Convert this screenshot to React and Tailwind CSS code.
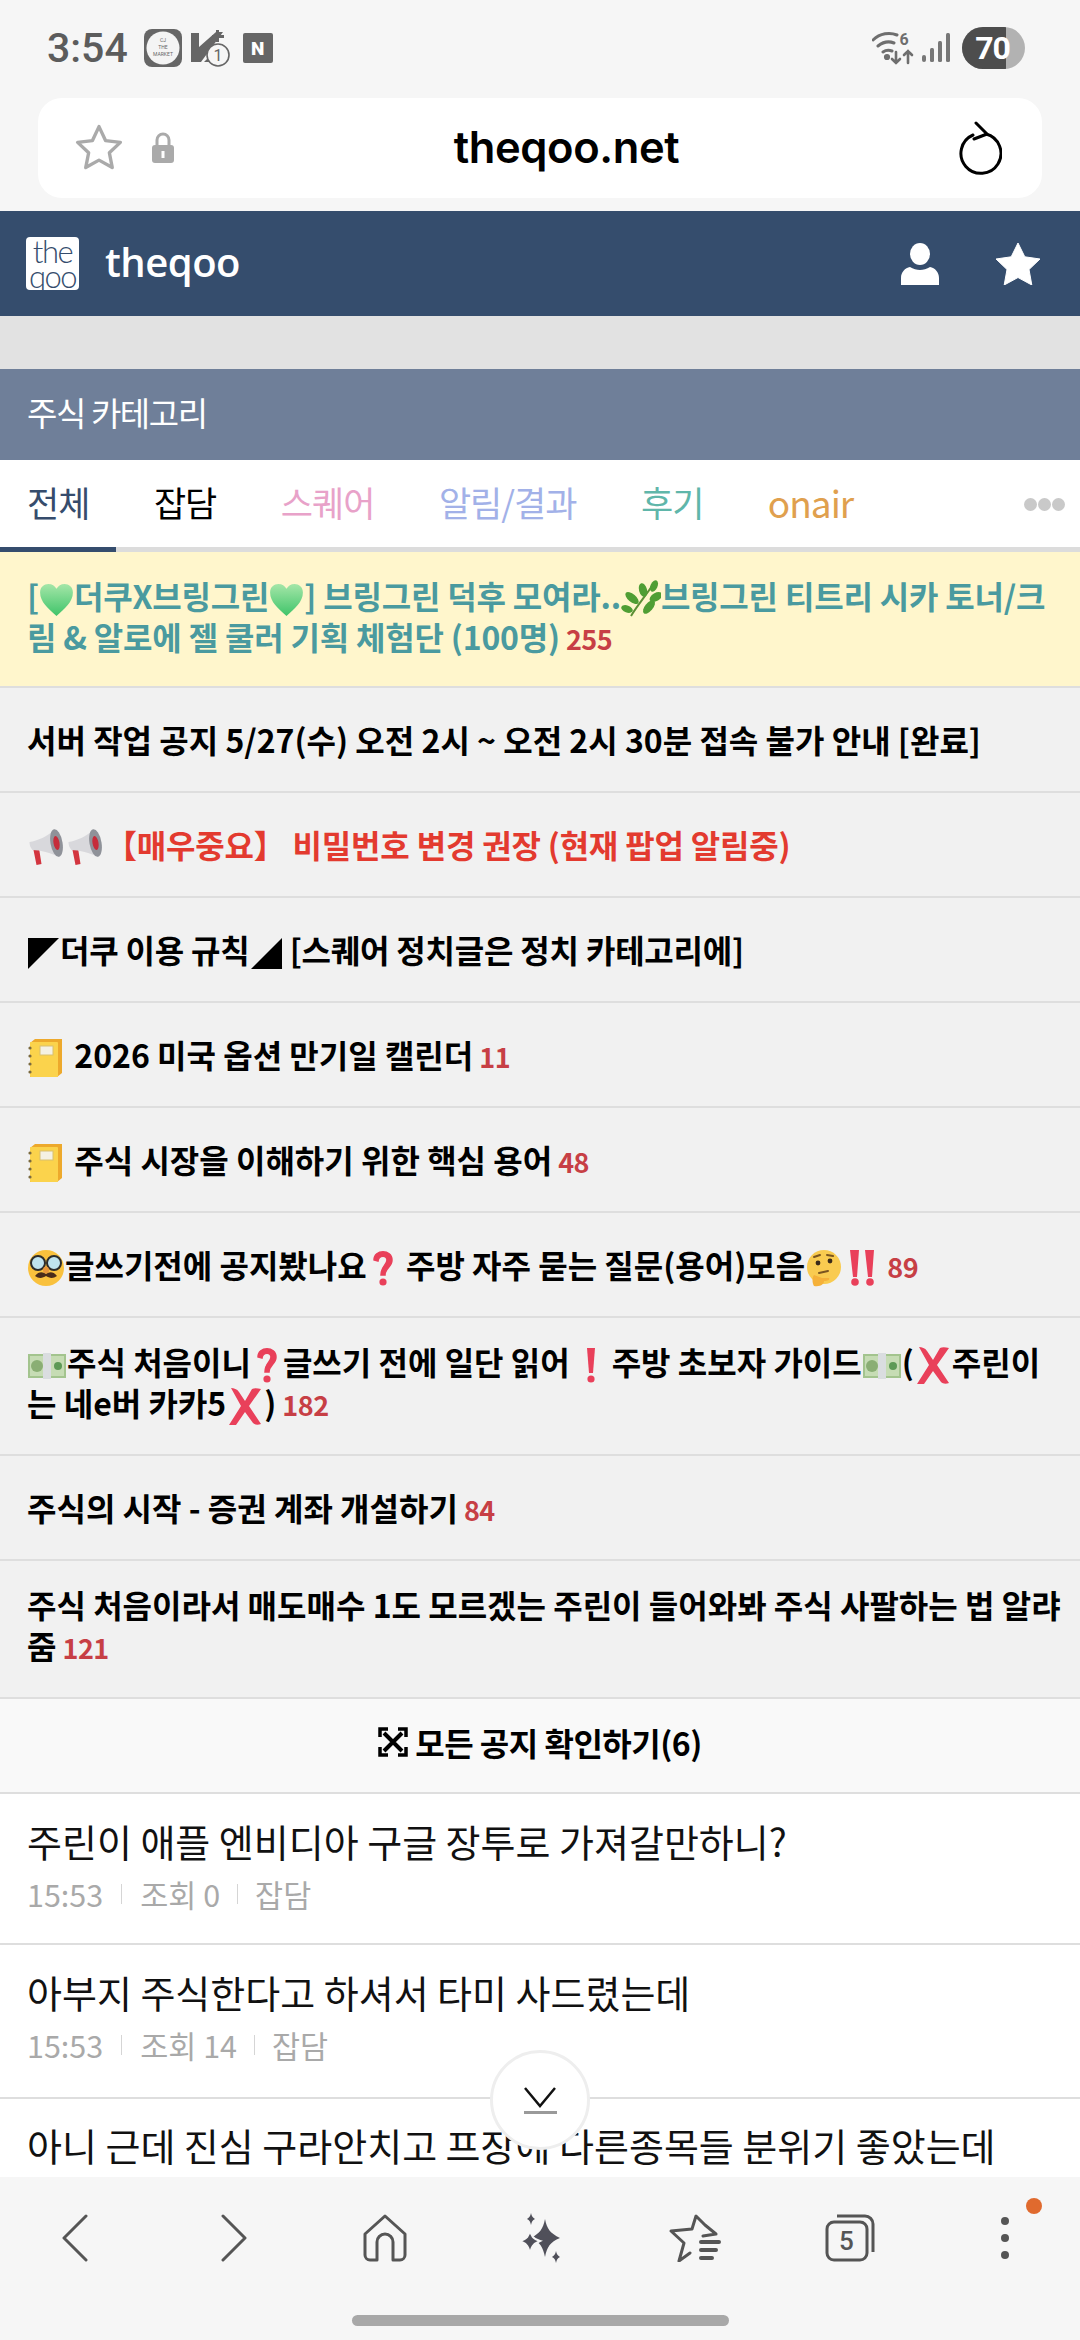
import React from 'react';

const Heart = () => (
  <svg viewBox="0 0 40 36" className="inline-block w-[41px] h-[34px] -my-[8px] -mx-[3px] align-[0px]" preserveAspectRatio="none">
    <defs>
      <linearGradient id="hg" x1="0" y1="0" x2="0" y2="1"><stop offset="0" stopColor="#a5e6a8" /><stop offset="1" stopColor="#3fc46a" /></linearGradient>
    </defs>
    <path d="M20 35C12 27 4 20 4 10 4 4 8 1 12 1c4 0 6 2 8 5 2-3 4-5 8-5 4 0 8 3 8 9 0 10-8 17-16 25z" fill="url(#hg)" />
  </svg>
);

const Herb = () => (
  <svg viewBox="0 0 40 38" className="inline-block w-[40px] h-[38px] -my-[10px] align-[1px]">
    <path d="M10 36C16 26 26 14 33 3" stroke="#5c8f35" strokeWidth="2" fill="none" />
    <g fill="#4f9e34">
      <ellipse cx="33" cy="6" rx="3.5" ry="6" transform="rotate(25 33 6)" />
      <ellipse cx="22" cy="10" rx="4" ry="7" transform="rotate(-15 22 10)" />
      <ellipse cx="35" cy="17" rx="4" ry="7" transform="rotate(60 35 17)" />
      <ellipse cx="11" cy="18" rx="4" ry="8" transform="rotate(-50 11 18)" />
      <ellipse cx="28" cy="27" rx="4" ry="8" transform="rotate(40 28 27)" />
      <ellipse cx="6" cy="29" rx="3.5" ry="6" transform="rotate(-70 6 29)" />
    </g>
  </svg>
);

const Megaphone = () => (
  <svg viewBox="0 0 38 38" className="inline-block w-[39px] h-[38px] -my-[10px] align-[1px]">
    <path d="M3 14l2 2 4 20 5-1-3-19z" fill="#d3353f" />
    <path d="M2 13c8-1 18-6 25-12l5 27c-9-4-19-7-27-7-2-2-3-5-3-8z" fill="#d8d8dc" />
    <ellipse cx="29" cy="14" rx="6" ry="14" fill="#8f9299" transform="rotate(-10 29 14)" />
    <ellipse cx="29" cy="14" rx="3" ry="7" fill="#c62c3a" transform="rotate(-10 29 14)" />
  </svg>
);

const Notebook = () => (
  <svg viewBox="0 0 36 40" className="inline-block w-[36px] h-[40px] -my-[10px] mr-[4px] align-[0px]">
    <path d="M3 5l5-4h27v34l-5 4H3z" fill="#eda92c" />
    <rect x="3" y="4" width="28" height="35" rx="1" fill="#fbd34c" />
    <rect x="13" y="8" width="13" height="9" fill="#f4f1e4" stroke="#d8c070" strokeWidth="1" />
    <g fill="#7a6a40">
      <circle cx="3" cy="10" r="1.6" /><circle cx="3" cy="18" r="1.6" /><circle cx="3" cy="26" r="1.6" /><circle cx="3" cy="34" r="1.6" />
    </g>
  </svg>
);

const Disguise = () => (
  <svg viewBox="0 0 38 38" className="inline-block w-[38px] h-[38px] -my-[10px] align-[1px]">
    <circle cx="19" cy="19" r="18" fill="#f9c13d" />
    <circle cx="11" cy="14" r="7" fill="#bfe3ee" stroke="#2c2c2c" strokeWidth="2" />
    <circle cx="27" cy="14" r="7" fill="#bfe3ee" stroke="#2c2c2c" strokeWidth="2" />
    <path d="M8 27c4-5 8-4 11-2 3-2 7-3 11 2-4 3-8 2-11 0-3 2-7 3-11 0z" fill="#4a2c1a" />
    <ellipse cx="19" cy="21" rx="3" ry="3.5" fill="#e8963a" />
  </svg>
);

const Thinking = () => (
  <svg viewBox="0 0 38 38" className="inline-block w-[38px] h-[38px] -my-[10px] align-[1px]">
    <circle cx="19" cy="18" r="17" fill="#f9cb50" />
    <circle cx="13" cy="14" r="2.4" fill="#3a2a1a" />
    <circle cx="25" cy="12" r="2.4" fill="#3a2a1a" />
    <path d="M9 8l6-2M22 6l6 1" stroke="#7a5520" strokeWidth="2" strokeLinecap="round" />
    <path d="M14 24l9-2" stroke="#7a5520" strokeWidth="2" strokeLinecap="round" />
    <path d="M9 37c-2-3-2-9 0-11l8 3 7 0c1 2-1 3-5 3 0 3-3 6-10 5z" fill="#f5b13a" />
  </svg>
);

const Question = () => (
  <svg viewBox="0 0 26 38" className="inline-block w-[26px] h-[38px] -my-[10px] mx-[3px] align-[1px]">
    <path d="M4 11c0-11 18-11 18 0 0 7-7 8-7 15h-4c0-9 6-10 6-15 0-5-8-5-9 1z" fill="#e9405a" stroke="#e9405a" strokeWidth="1.5" />
    <circle cx="13" cy="33" r="3.6" fill="#e9405a" />
  </svg>
);

const Bang = () => (
  <svg viewBox="0 0 14 38" className="inline-block w-[14px] h-[38px] -my-[10px] mx-[14px] align-[1px]">
    <path d="M3 2h8l-2 25H5z" fill="#e9405a" />
    <circle cx="7" cy="33" r="3.6" fill="#e9405a" />
  </svg>
);

const DoubleBang = () => (
  <svg viewBox="0 0 28 38" className="inline-block w-[28px] h-[38px] -my-[10px] mx-[5px] align-[1px]">
    <path d="M2 1h9l-2 27H5zM17 1h9l-2 27h-4z" fill="#e9405a" />
    <circle cx="7" cy="33" r="3.8" fill="#e9405a" />
    <circle cx="22" cy="33" r="3.8" fill="#e9405a" />
  </svg>
);

const Money = () => (
  <svg viewBox="0 0 38 26" className="inline-block w-[40px] h-[26px] -my-[4px] align-[0px]">
    <rect x="0" y="1" width="38" height="24" fill="#a3c48e" />
    <rect x="2" y="3" width="34" height="20" fill="#c6dcb4" />
    <circle cx="9" cy="13" r="6" fill="#8aae74" />
    <circle cx="30" cy="13" r="4" fill="#5d9a56" />
    <rect x="15" y="0" width="8" height="26" fill="#dadde0" />
  </svg>
);

const Cross = () => (
  <svg viewBox="0 0 38 38" className="inline-block w-[38px] h-[38px] -my-[10px] align-[1px]">
    <path d="M5 1c3 0 6 1 8 4l6 9 7-12c2-1 5-1 9 0L23 19l12 18c-3 1-6 1-8-1l-8-11-9 13H3l12-19z" fill="#e9405a" />
  </svg>
);

const CornerA = () => (
  <svg viewBox="0 0 34 34" className="inline-block w-[33px] h-[33px] -my-[6px] align-[-1px]"><path d="M1 1h32L1 33z" fill="#000" /></svg>
);

const CornerB = () => (
  <svg viewBox="0 0 34 34" className="inline-block w-[33px] h-[33px] -my-[6px] align-[-1px]"><path d="M33 1v32H1z" fill="#000" /></svg>
);

const Count = ({ n }) => <span className="text-[#c73f45] text-[27px] leading-none font-bold tracking-[-0.5px] ml-[6px]">{n}</span>;

const Notice = ({ children, className = '' }) => (
  <div className={'min-h-[105px] flex items-center pl-[27px] pr-[20px] pt-[30px] pb-[31px] border-b-2 border-[#dedede] bg-[#f1f1f1] text-[32px] font-bold leading-[41px] text-black ' + className}>
    <div className="w-full">{children}</div>
  </div>
);

const Post = ({ title, views, cat, height }) => (
  <div className={'px-[27px] pt-[24px] border-b-2 border-[#dedede] bg-white ' + height}>
    <div className="text-[38px] leading-[46px] text-[#111] whitespace-nowrap">{title}</div>
    <div className="mt-[10px] flex items-center text-[30.5px] leading-[40px] text-[#a9a9a9]">
      <span>15:53</span>
      <span className="w-px h-[20px] bg-[#d5d5d5] mx-[18px]"></span>
      <span>조회 {views}</span>
      <span className="w-px h-[20px] bg-[#d5d5d5] mx-[17px]"></span>
      <span>{cat}</span>
    </div>
  </div>
);

const StatusBar = () => (
  <div className="h-[98px] flex items-center justify-between pl-[47px] pr-[55px] pb-[2px]">
    <div className="flex items-center">
      <span className="font-['Roboto',sans-serif] font-medium text-[41px] leading-none text-[#5c5c5c]">3:54</span>
      <svg viewBox="0 0 38 38" className="w-[38px] h-[38px] ml-[16px]">
        <rect width="38" height="38" rx="8" fill="#666" />
        <circle cx="19" cy="19" r="16.5" fill="#f4f4f4" />
        <text x="19" y="13" textAnchor="middle" fontSize="5" fill="#666" fontFamily="Roboto">CJ</text>
        <text x="19" y="20" textAnchor="middle" fontSize="5" fill="#666" fontFamily="Roboto">THE</text>
        <text x="19" y="27" textAnchor="middle" fontSize="5" fill="#666" fontFamily="Roboto">MARKET</text>
      </svg>
      <svg viewBox="0 0 42 40" className="w-[42px] h-[40px] ml-[8px]">
        <path d="M1 5h8v14L26 4h7L11 34H1z" fill="#666" />
        <path d="M26 2h3v5h5v3h-5v4h-3v-4h-4V7h4z" fill="#666" />
        <path d="M14 34l8-8 3 8z" fill="#666" />
        <circle cx="28" cy="27" r="11" fill="#f6f6f6" stroke="#666" strokeWidth="1.6" />
        <text x="28" y="33" textAnchor="middle" fontSize="16" fill="#666" fontFamily="Roboto">1</text>
      </svg>
      <div className="w-[30px] h-[30px] ml-[11px] bg-[#666] rounded-[2px] flex items-center justify-center text-white font-['Roboto',sans-serif] font-black text-[19px] leading-none">N</div>
    </div>
    <div className="flex items-center">
      <svg viewBox="0 0 42 36" className="w-[42px] h-[36px]" fill="none" stroke="#6e6e6e" strokeWidth="3" strokeLinecap="round">
        <path d="M1 10c7-7 17-8 24-5M6 16c5-4 11-5 16-3M11 22c3-2 6-2 9-1" />
        <circle cx="15" cy="27" r="1.6" fill="#6e6e6e" />
        <path d="M24 22v11M20 29l4 4 4-4M36 33V21M32 25l4-4 4 4" strokeWidth="2.6" />
        <text x="32" y="15" textAnchor="middle" fontSize="16" fontWeight="700" fill="#6e6e6e" stroke="none" fontFamily="Roboto">6</text>
      </svg>
      <svg viewBox="0 0 28 30" className="w-[28px] h-[30px] ml-[8px]" fill="#777">
        <rect x="0" y="22" width="4" height="7" rx="2" /><rect x="8" y="15" width="4" height="14" rx="1.5" /><rect x="16" y="8" width="4" height="21" rx="1.5" /><rect x="24" y="0" width="4" height="29" rx="1.5" />
      </svg>
      <div className="relative w-[63px] h-[42px] ml-[12px] rounded-full overflow-hidden bg-[#b2b2b2]">
        <div className="h-full w-[44px] bg-[#4d4d4d]"></div>
        <span className="absolute inset-0 flex items-center justify-center pr-[2px] font-['Roboto',sans-serif] font-bold text-[32px] text-white tracking-[-1px]">70</span>
      </div>
    </div>
  </div>
);

const UrlBar = () => (
  <div className="h-[113px] px-[38px]">
    <div className="h-[100px] rounded-[24px] bg-white flex items-center pl-[34px] pr-[40px]">
      <svg viewBox="0 0 24 24" className="w-[54px] h-[54px]" fill="none" stroke="#aaa" strokeWidth="1.5" strokeLinejoin="round">
        <path d="M12 2.5l2.9 6.2 6.6.8-4.9 4.6 1.3 6.6L12 17.4l-5.9 3.3 1.3-6.6L2.5 9.5l6.6-.8z" />
      </svg>
      <svg viewBox="0 0 24 32" className="w-[24px] h-[32px] ml-[25px]">
        <path d="M6 14V8a6 6 0 0 1 12 0v6" fill="none" stroke="#aaa" strokeWidth="3" />
        <rect x="1" y="13" width="22" height="18" rx="3" fill="#aaa" />
        <rect x="10.5" y="19" width="3" height="7" fill="#fff" />
      </svg>
      <div className="flex-1 text-center font-['Inter',sans-serif] font-semibold text-[43.5px] leading-none text-black tracking-[-0.4px]">theqoo.net</div>
      <svg viewBox="0 0 44 54" className="w-[44px] h-[54px]" fill="none" stroke="#000" strokeWidth="3" strokeLinecap="round" strokeLinejoin="round">
        <path d="M28 13A20 20 0 1 1 15 14" />
        <path d="M18 2l11 11-13 5" />
      </svg>
    </div>
  </div>
);

const SiteHeader = () => (
  <div className="h-[105px] bg-[#354d6d] flex items-center pl-[26px] pr-[39px]">
    <div className="w-[53px] h-[53px] bg-white rounded-[4px] flex flex-col items-center justify-center font-['Lato',sans-serif] font-light text-[#354d6d] text-[31px] leading-[25px] tracking-[-1.5px]">
      <span>the</span>
      <span>qoo</span>
    </div>
    <span className="ml-[26px] font-['Open_Sans',sans-serif] font-semibold text-[40px] leading-none text-white tracking-[-0.5px] pb-[4px]">theqoo</span>
    <div className="flex-1"></div>
    <svg viewBox="0 0 38 42" className="w-[38px] h-[42px]" fill="#fff">
      <ellipse cx="19" cy="11" rx="10" ry="11" />
      <path d="M0 42V35c0-6 4-10 9-11 3 2 7 3 10 3s7-1 10-3c5 1 9 5 9 11v7z" />
    </svg>
    <svg viewBox="0 0 46 42" className="w-[46px] h-[42px] ml-[56px]" fill="#fff">
      <path d="M23 0l6.8 13.8L45 16l-11 10.500 2.800 15.500L23 34.500 9.200 42 12 26.500 1 16l15.200-2.200z" stroke="#fff" strokeWidth="1" strokeLinejoin="round" />
    </svg>
  </div>
);

const Tabs = () => (
  <div className="relative h-[92px] bg-white border-b-[5px] border-[#dcdcdc] flex items-center pl-[27px] gap-[64.5px] text-[35px] tracking-[-1px] pb-[2px]">
    <span className="text-[#364c6c]">전체</span>
    <span className="text-black">잡담</span>
    <span className="text-[#e8a2c9]">스퀘어</span>
    <span className="text-[#a2b1e8]">알림/결과</span>
    <span className="text-[#5fb6aa]">후기</span>
    <span className="text-[#e0a04e] text-[37px]">onair</span>
    <div className="absolute right-[15px] top-[38px] flex gap-[1px]">
      <span className="w-[13px] h-[13px] rounded-full bg-[#c9c9c9]"></span>
      <span className="w-[13px] h-[13px] rounded-full bg-[#c9c9c9]"></span>
      <span className="w-[13px] h-[13px] rounded-full bg-[#c9c9c9]"></span>
    </div>
    <div className="absolute left-0 bottom-[-5px] w-[116px] h-[5px] bg-[#354d6d]"></div>
  </div>
);

const BottomBar = () => (
  <div className="relative h-[163px] bg-[#f6f6f6] shrink-0">
    <div className="h-[122px] -ml-[3px] grid grid-cols-[repeat(7,155px)] items-center justify-items-center">
      <svg viewBox="0 0 26 48" className="w-[26px] h-[48px]" fill="none" stroke="#555" strokeWidth="3" strokeLinecap="round" strokeLinejoin="round"><path d="M24 2L2 24l22 22" /></svg>
      <svg viewBox="0 0 26 48" className="w-[26px] h-[48px] ml-[8px]" fill="none" stroke="#555" strokeWidth="3" strokeLinecap="round" strokeLinejoin="round"><path d="M2 2l22 22L2 46" /></svg>
      <svg viewBox="0 0 44 48" className="w-[44px] h-[48px]" fill="none" stroke="#555" strokeWidth="3" strokeLinejoin="round"><path d="M2 20L22 2l20 18v21a5 5 0 0 1-5 5h-7V28a8 8 0 0 0-16 0v18H7a5 5 0 0 1-5-5z" /></svg>
      <svg viewBox="0 0 44 50" className="w-[44px] h-[50px]" fill="#50505a">
        <path d="M27 6c2 10 5 14 15 19-10 4-13 9-15 19-2-10-5-15-14-19 9-5 12-9 14-19z" />
        <path d="M12 16c1 7 3 10 10 12-7 3-9 6-10 14-1-8-3-11-10-14 7-2 9-5 10-12z" stroke="#f6f6f6" strokeWidth="2" />
        <path d="M13 0c.6 3 1.500 4.500 4 6-2.500 1-3.400 3-4 6-.6-3-1.500-5-4-6 2.500-1.500 3.400-3 4-6zM38 38c.6 3 1.500 4.500 4 6-2.500 1-3.400 3-4 6-.6-3-1.500-5-4-6 2.500-1.500 3.400-3 4-6z" />
      </svg>
      <svg viewBox="0 0 52 48" className="w-[52px] h-[48px]" fill="none" stroke="#555" strokeWidth="3" strokeLinejoin="round" strokeLinecap="round">
        <path d="M34 22l13-2-11-9-9-9-4 13-21 2 13 12-5 18 11-8" />
        <path d="M32 28h18M32 36h15M32 44h11" strokeWidth="4" />
      </svg>
      <div className="relative w-[50px] h-[48px]">
        <svg viewBox="0 0 50 48" className="absolute inset-0 w-[50px] h-[48px]" fill="none" stroke="#555" strokeWidth="3">
          <path d="M12 2h28a8 8 0 0 1 8 8v28" />
          <rect x="2" y="8" width="40" height="38" rx="7" />
        </svg>
        <span className="absolute left-[2px] top-[8px] w-[40px] h-[38px] flex items-center justify-center font-['Roboto',sans-serif] font-medium text-[26px] text-[#555]">5</span>
      </div>
      <div className="flex flex-col gap-[9px]">
        <span className="w-[8px] h-[8px] rounded-full bg-[#555]"></span>
        <span className="w-[8px] h-[8px] rounded-full bg-[#555]"></span>
        <span className="w-[8px] h-[8px] rounded-full bg-[#555]"></span>
      </div>
    </div>
    <div className="absolute left-[1026px] top-[21px] w-[16px] h-[16px] rounded-full bg-[#e06a2e]"></div>
    <div className="mx-auto mt-[16px] w-[377px] h-[11px] rounded-full bg-[#a8a8a8]"></div>
  </div>
);

export default function App() {
  return (
    <div className="relative w-[1080px] h-[2340px] flex flex-col overflow-hidden bg-[#f6f6f6] font-['Noto_Sans_CJK_KR','Noto_Sans',sans-serif]">
      <StatusBar />
      <UrlBar />
      <SiteHeader />
      <div className="flex-1 min-h-0 overflow-hidden bg-white">
        <div className="h-[53px] bg-[#e2e2e2]"></div>
        <div className="h-[91px] bg-[#6f7f99] flex items-center px-[27px] pb-[3px] text-[33px] text-white tracking-[-1.4px]">주식 카테고리</div>
        <Tabs />

        <Notice className="!bg-[#fff6cc] !text-[#4a9a9f] tracking-[-0.2px] !pt-[23px] !pb-[29px]">
          [<Heart />더쿠X브링그린<Heart />] 브링그린 덕후 모여라..<Herb />브링그린 티트리 시카 토너/크림 &amp; 알로에 젤 쿨러 기획 체험단 (100명)<Count n="255" />
        </Notice>
        <Notice>서버 작업 공지 5/27(수) 오전 2시 ~ 오전 2시 30분 접속 불가 안내 [완료]</Notice>
        <Notice className="!text-[#e33a2f] tracking-[-0.2px]"><Megaphone /><Megaphone />【매우중요】 비밀번호 변경 권장 (현재 팝업 알림중)</Notice>
        <Notice className="tracking-[-0.2px]"><CornerA />더쿠 이용 규칙<CornerB /> [스퀘어 정치글은 정치 카테고리에]</Notice>
        <Notice><Notebook /> 2026 미국 옵션 만기일 캘린더<Count n="11" /></Notice>
        <Notice><Notebook /> 주식 시장을 이해하기 위한 핵심 용어<Count n="48" /></Notice>
        <Notice><Disguise />글쓰기전에 공지봤나요<Question /> 주방 자주 묻는 질문(용어)모음<Thinking /><DoubleBang /><Count n="89" /></Notice>
        <Notice className="!pt-[23px]"><Money />주식 처음이니<Question />글쓰기 전에 일단 읽어<Bang />주방 초보자 가이드<Money />(<Cross />주린이는 네e버 카카5<Cross />)<Count n="182" /></Notice>
        <Notice>주식의 시작 - 증권 계좌 개설하기<Count n="84" /></Notice>
        <Notice className="!pt-[23px] !pr-[10px]">주식 처음이라서 매도매수 1도 모르겠는 주린이 들어와봐 주식 사팔하는 법 알랴줌<Count n="121" /></Notice>

        <div className="h-[95px] bg-[#f9f9f9] border-b-2 border-[#dedede] flex items-center justify-center pb-[7px] text-[32px] font-bold tracking-[-0.5px] text-black">
          <svg viewBox="0 0 30 30" className="w-[30px] h-[30px] mr-[7px]" fill="none" stroke="#000" strokeWidth="4">
            <path d="M6 6l18 18M24 6L6 24" />
            <path d="M2 10V2h8M20 2h8v8M28 20v8h-8M10 28H2v-8" strokeWidth="3.500" />
          </svg>
          모든 공지 확인하기(6)
        </div>
        <Post title="주린이 애플 엔비디아 구글 장투로 가져갈만하니?" views="0" cat="잡담" height="h-[151px]" />
        <Post title="아부지 주식한다고 하셔서 타미 사드렸는데" views="14" cat="잡담" height="h-[154px]" />
        <div className="px-[27px] pt-[23px] text-[38px] leading-[46px] text-[#111] whitespace-nowrap">아니 근데 진심 구라안치고 프장에 다른종목들 분위기 좋았는데</div>
      </div>
      <BottomBar />
      <div className="absolute left-[490px] top-[2050px] w-[100px] h-[100px] rounded-full bg-white border-[3px] border-[#eeeeee] flex flex-col items-center justify-center">
        <svg viewBox="0 0 34 24" className="w-[34px] h-[24px]" fill="none" stroke="#111" strokeWidth="2.500"><path d="M2 2l15 18L32 2" /></svg>
        <span className="w-[33px] h-[3px] bg-[#9a9a9a] mt-[1px]"></span>
      </div>
    </div>
  );
}
